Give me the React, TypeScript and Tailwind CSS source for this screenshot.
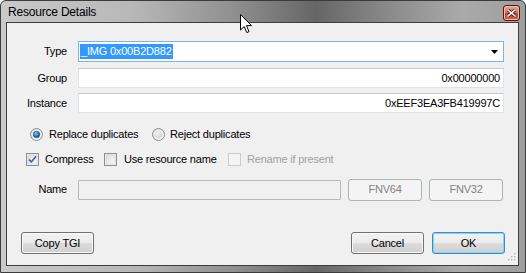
import React from "react";

const font = { fontFamily: '"Liberation Sans", Arial, sans-serif' };

function Radio({ checked }: { checked?: boolean }) {
  return (
    <svg width="13" height="13" viewBox="0 0 13 13" className="shrink-0">
      <defs>
        <linearGradient id="rbg" x1="0" y1="0" x2="1" y2="1">
          <stop offset="0" stopColor="#d9d9d9" />
          <stop offset="1" stopColor="#f7f7f7" />
        </linearGradient>
        <radialGradient id="rdot" cx="0.4" cy="0.35" r="0.7">
          <stop offset="0" stopColor="#8fd0f5" />
          <stop offset="0.5" stopColor="#2f7fc0" />
          <stop offset="1" stopColor="#164f82" />
        </radialGradient>
        <radialGradient id="rgray" cx="0.4" cy="0.35" r="0.7">
          <stop offset="0" stopColor="#f4f4f4" />
          <stop offset="1" stopColor="#cfcfcf" />
        </radialGradient>
      </defs>
      <circle cx="6.5" cy="6.5" r="6" fill="url(#rbg)" stroke="#8c8e8f" />
      <circle cx="6.5" cy="6.5" r="4.5" fill="#f5f5f5" />
      {checked ? (
        <circle cx="6.5" cy="6.5" r="3.3" fill="url(#rdot)" stroke="#1a4f7c" strokeWidth="0.6" />
      ) : (
        <circle cx="6.5" cy="6.5" r="3.8" fill="url(#rgray)" />
      )}
    </svg>
  );
}

function Check({ checked, disabled }: { checked?: boolean; disabled?: boolean }) {
  return (
    <svg width="13" height="13" viewBox="0 0 13 13" className="shrink-0">
      <defs>
        <linearGradient id="cbg" x1="0" y1="0" x2="1" y2="1">
          <stop offset="0" stopColor="#dcdcdc" />
          <stop offset="1" stopColor="#fbfbfb" />
        </linearGradient>
      </defs>
      <rect x="0.5" y="0.5" width="12" height="12" fill={disabled ? "#f4f4f4" : "#f4f4f4"} stroke={disabled ? "#c9cbcc" : "#8e8f8f"} />
      {!disabled && <rect x="2" y="2" width="9" height="9" fill="url(#cbg)" stroke="#c8c8c8" strokeWidth="0.6" />}
      {checked && (
        <path d="M3 6.5 L5.3 9 L10 3.2" fill="none" stroke="#4a5f97" strokeWidth="1.6" strokeLinejoin="round" />
      )}
    </svg>
  );
}

function Btn({
  children,
  w,
  def,
  disabled,
}: {
  children: React.ReactNode;
  w: string;
  def?: boolean;
  disabled?: boolean;
}) {
  const base = "h-[22px] flex items-center justify-center rounded-[3px] border text-[11px] tracking-[-0.2px]";
  if (disabled)
    return (
      <div className={`${base} ${w} h-[21px] border-[#adb2b5] bg-[#f4f4f4] text-[#838383]`}>{children}</div>
    );
  return (
    <div
      className={`${base} ${w} text-black bg-[linear-gradient(to_bottom,#f2f2f2_0%,#ebebeb_50%,#dddddd_50%,#cfcfcf_100%)] ${
        def
          ? "border-[#3a8ccb] shadow-[inset_0_0_0_1px_#7fd4f7]"
          : "border-[#707070] shadow-[inset_0_0_0_1px_#fbfbfb]"
      }`}
    >
      {children}
    </div>
  );
}

export default function App() {
  return (
    <div className="relative w-[526px] h-[273px] overflow-hidden bg-white" style={font}>
      <div className="w-full h-full border border-[#3b3b3b] rounded-t-[6px] flex flex-col bg-[linear-gradient(90deg,#c9c9c9_0%,#b8b8b8_25%,#8e8e8e_45%,#666666_60%,#8a8a8a_74%,#aaaaaa_88%,#9e9e9e_100%)]">
        {/* title bar */}
        <div className="h-[21px] flex items-start shrink-0">
          <div className="pl-[7px] pt-[4px] text-[12px] tracking-[-0.2px] text-black leading-[14px]">Resource Details</div>
          <div className="flex-1" />
          <div className="mt-[4px] mr-[5px] w-[17px] h-[16px] rounded-[3px] border border-[#4a1c12] bg-[linear-gradient(to_bottom,#eba493_0%,#d97a62_45%,#c2402a_55%,#d9634a_100%)] shadow-[inset_0_0_0_1px_#f2b8a8] flex items-center justify-center">
            <svg width="9" height="8" viewBox="0 0 9 8">
              <path d="M1 1 L8 7 M8 1 L1 7" stroke="#3a1a14" strokeWidth="3.2" strokeLinecap="square" />
              <path d="M1 1 L8 7 M8 1 L1 7" stroke="#ffffff" strokeWidth="1.6" strokeLinecap="square" />
            </svg>
          </div>
        </div>
        {/* client area */}
        <div className="ml-[5px] mr-[6px] mb-[6px] flex-1 border border-[#3e3e3e] bg-[#f0f0f0] relative flex flex-col pt-[18px] text-[11px] tracking-[-0.2px] text-black">
          {/* Type */}
          <div className="flex items-center h-[21px] pr-[14px]">
            <div className="w-[60px] text-right">Type</div>
            <div className="ml-[11px] w-[426px] h-[21px] bg-white border border-[#7eb4ea] flex items-center pl-[1px] pr-[5px]">
              <span className="bg-[#3399ff] text-white px-[1px] leading-[15px] h-[15px]">_IMG 0x00B2D882</span>
              <div className="flex-1" />
              <svg width="7" height="4" viewBox="0 0 7 4">
                <path d="M0 0 H7 L3.5 4 Z" fill="#000" />
              </svg>
            </div>
          </div>
          {/* Group */}
          <div className="flex items-center h-[20px] mt-[6px] pr-[14px]">
            <div className="w-[60px] text-right">Group</div>
            <div className="ml-[11px] w-[426px] h-[20px] bg-white border border-[#dfe2e6] border-t-[#c6cad0] flex items-center justify-end pr-[3px]">
              0x00000000
            </div>
          </div>
          {/* Instance */}
          <div className="flex items-center h-[20px] mt-[5px] pr-[14px]">
            <div className="w-[60px] text-right">Instance</div>
            <div className="ml-[11px] w-[426px] h-[20px] bg-white border border-[#dfe2e6] border-t-[#c6cad0] flex items-center justify-end pr-[3px]">
              0xEEF3EA3FB419997C
            </div>
          </div>
          {/* radios */}
          <div className="flex items-center h-[13px] mt-[15px] pl-[23px]">
            <div className="w-[122px] flex items-center gap-[6px]">
              <Radio checked />
              <span>Replace duplicates</span>
            </div>
            <div className="flex items-center gap-[5px]">
              <Radio />
              <span>Reject duplicates</span>
            </div>
          </div>
          {/* checkboxes */}
          <div className="flex items-center h-[13px] mt-[12px] pl-[19px]">
            <div className="w-[78px] flex items-center gap-[6px]">
              <Check checked />
              <span>Compress</span>
            </div>
            <div className="w-[124px] flex items-center gap-[7px]">
              <Check />
              <span>Use resource name</span>
            </div>
            <div className="flex items-center gap-[6px]">
              <Check disabled />
              <span className="text-[#a0a0a0]">Rename if present</span>
            </div>
          </div>
          {/* name */}
          <div className="flex items-center h-[21px] mt-[13px]">
            <div className="w-[60px] text-right">Name</div>
            <div className="ml-[11px] w-[263px] h-[20px] bg-[#f0f0f0] border border-[#b8b8b8] rounded-[1px]" />
            <div className="ml-[7px]">
              <Btn w="w-[74px]" disabled>
                FNV64
              </Btn>
            </div>
            <div className="ml-[7px]">
              <Btn w="w-[74px]" disabled>
                FNV32
              </Btn>
            </div>
          </div>
          {/* bottom buttons */}
          <div className="flex items-center mt-[32px] pl-[14px] pr-[13px]">
            <Btn w="w-[73px]">Copy TGI</Btn>
            <div className="flex-1" />
            <Btn w="w-[73px]">Cancel</Btn>
            <div className="ml-[8px]">
              <Btn w="w-[73px]" def>
                OK
              </Btn>
            </div>
          </div>
          {/* size grip */}
          <svg className="absolute right-[2px] bottom-[2px]" width="10" height="10" viewBox="0 0 10 10">
            {[
              [8, 0],
              [8, 3],
              [5, 3],
              [8, 6],
              [5, 6],
              [2, 6],
            ].map(([x, y], i) => (
              <g key={i}>
                <rect x={x + 1} y={y + 1} width="1.5" height="1.5" fill="#ffffff" />
                <rect x={x} y={y} width="1.5" height="1.5" fill="#b8b8b8" />
              </g>
            ))}
          </svg>
        </div>
      </div>
      {/* mouse cursor */}
      <svg className="absolute left-[240px] top-[14px]" width="13" height="20" viewBox="0 0 13 20">
        <path d="M0.5 0.5 L0.5 16 L4.2 12.5 L6.8 18.6 L9 17.6 L6.5 11.6 L11.5 11.6 Z" fill="#ffffff" stroke="#000" strokeWidth="1" strokeLinejoin="miter" />
      </svg>
    </div>
  );
}
